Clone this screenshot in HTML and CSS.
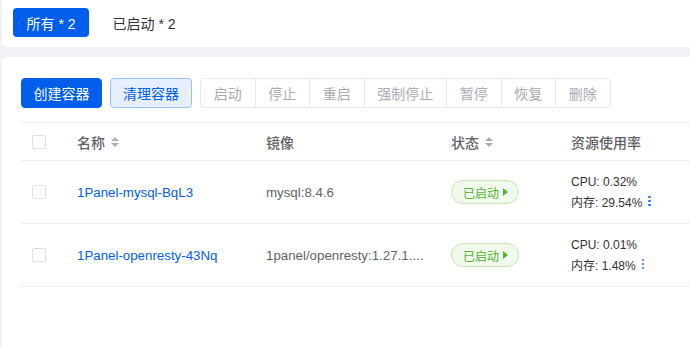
FILE: index.html
```html
<!DOCTYPE html>
<html lang="zh">
<head>
<meta charset="utf-8">
<link rel="stylesheet" href="styles.css">
</head>
<body>
<div class="page">
  <div class="card tabs">
    <button class="tab active">所有 * 2</button>
    <button class="tab">已启动 * 2</button>
  </div>
  <div class="card main">
    <div class="toolbar">
      <button class="btn primary">创建容器</button>
      <button class="btn plain">清理容器</button>
      <div class="group">
        <span class="gbtn">启动</span><span class="gbtn">停止</span><span class="gbtn">重启</span><span class="gbtn">强制停止</span><span class="gbtn">暂停</span><span class="gbtn">恢复</span><span class="gbtn">删除</span>
      </div>
    </div>
    <div class="table">
      <div class="row head">
        <div class="cell"><span class="check"></span></div>
        <div class="cell">名称 <span class="sort"></span></div>
        <div class="cell">镜像</div>
        <div class="cell">状态 <span class="sort"></span></div>
        <div class="cell">资源使用率</div>
      </div>
      <div class="row">
        <div class="cell"><span class="check"></span></div>
        <div class="cell link">1Panel-mysql-BqL3</div>
        <div class="cell">mysql:8.4.6</div>
        <div class="cell"><span class="tag">已启动 <span class="play"></span></span></div>
        <div class="cell res">
          <div>CPU: 0.32%</div>
          <div>内存: 29.54% <span class="more"><i></i><i></i><i></i></span></div>
        </div>
      </div>
      <div class="row">
        <div class="cell"><span class="check"></span></div>
        <div class="cell link">1Panel-openresty-43Nq</div>
        <div class="cell">1panel/openresty:1.27.1....</div>
        <div class="cell"><span class="tag">已启动 <span class="play"></span></span></div>
        <div class="cell res">
          <div>CPU: 0.01%</div>
          <div>内存: 1.48% <span class="more"><i></i><i></i><i></i></span></div>
        </div>
      </div>
    </div>
  </div>
</div>
</body>
</html>
```
FILE: styles.css
```css
* { box-sizing: border-box; }
html, body { margin: 0; padding: 0; }
body {
  background: #f0f2f5;
  font-family: "Liberation Sans", "Noto Sans CJK SC", sans-serif;
  font-size: 14px;
  color: #606266;
  width: 690px;
  height: 348px;
  overflow: hidden;
}
.page {
  padding-left: 2px;
  width: 760px;
  display: flex;
  flex-direction: column;
  gap: 10px;
}
.card {
  background: #fff;
  border-radius: 6px;
}
.tabs {
  height: 47px;
  border-radius: 0 0 6px 6px;
  display: flex;
  align-items: center;
  padding: 0 11px;
  gap: 10px;
}
.tab {
  font: inherit;
  height: 29px;
  padding: 0 13.5px;
  border: none;
  border-radius: 4px;
  background: transparent;
  color: #303133;
  margin-bottom: 2px;
  white-space: nowrap;
}
.tab.active {
  background: #005eeb;
  color: #fff;
}
.main {
  height: 300px;
  padding: 21px 0 0 19px;
}
.toolbar {
  display: flex;
  gap: 8px;
  height: 30px;
  align-items: center;
}
.btn {
  font: inherit;
  height: 30px;
  padding: 0 12px;
  border-radius: 4px;
  border: 1px solid #005eeb;
  white-space: nowrap;
}
.btn.primary { background: #005eeb; color: #fff; padding: 0 11.5px; }
.btn.plain { background: #e6effd; border-color: #99bff7; color: #005eeb; }
.group {
  display: flex;
  height: 30px;
  border: 1px solid #e4e7ed;
  border-radius: 4px;
}
.gbtn {
  display: flex;
  align-items: center;
  padding: 0 12.75px;
  color: #a8abb2;
  border-left: 1px solid #e4e7ed;
  white-space: nowrap;
}
.gbtn:first-child { border-left: none; }
.table {
  margin-top: 14px;
  border-top: 1px solid #ebeef5;
}
.row {
  display: grid;
  grid-template-columns: 44px 189px 185px 120px 1fr;
  height: 63px;
  border-bottom: 1px solid #ebeef5;
  align-items: center;
}
.row.head {
  height: 38px;
  font-weight: 500;
  color: #606266;
}
.cell {
  padding-left: 12px;
  white-space: nowrap;
  display: flex;
  align-items: center;
  font-size: 13.3px;
}
.row.head .cell { font-size: 14px; }
.cell:first-child { padding-left: 11px; }
.check {
  width: 14px;
  height: 14px;
  border: 1px solid #dcdfe6;
  border-radius: 2px;
  background: #fff;
}
.sort {
  display: inline-flex;
  flex-direction: column;
  gap: 2px;
  margin-left: 6px;
}
.sort::before, .sort::after {
  content: "";
  border-left: 4px solid transparent;
  border-right: 4px solid transparent;
}
.sort::before { border-bottom: 4px solid #a8abb2; }
.sort::after { border-top: 4px solid #a8abb2; }
.link { color: #005eeb; }
.tag {
  display: inline-flex;
  align-items: center;
  height: 24px;
  padding: 0 10px 0 11px;
  border: 1px solid #c6e6b3;
  background: #f0f9eb;
  color: #52b130;
  border-radius: 12px;
  font-size: 12px;
  gap: 1px;
}
.play {
  width: 0;
  height: 0;
  border-top: 4px solid transparent;
  border-bottom: 4px solid transparent;
  border-left: 5px solid #52b130;
  margin-left: 3px;
}
.res {
  flex-direction: column;
  align-items: flex-start;
  font-size: 12px;
  gap: 4px;
  color: #303133;
}
.res div { display: flex; align-items: center; }
.more {
  display: inline-flex;
  flex-direction: column;
  gap: 1.5px;
  margin-left: 6px;
}
.more i {
  width: 2.5px;
  height: 2.5px;
  border-radius: 50%;
  background: #1a73e8;
}
```
